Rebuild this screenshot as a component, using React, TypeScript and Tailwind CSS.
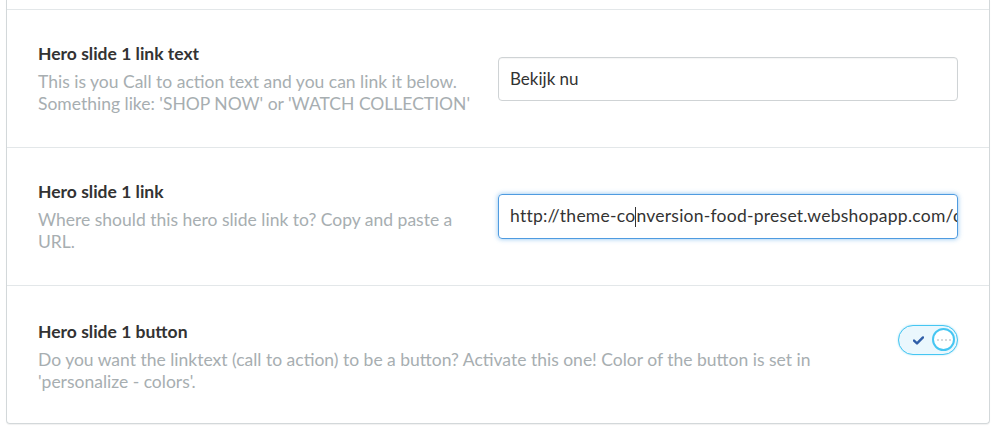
import React from "react";

const font = { fontFamily: "Lato, 'Open Sans', sans-serif" };

function Toggle() {
  return (
    <div className="relative flex h-[30px] w-[60px] shrink-0 items-center rounded-full border-[1.5px] border-[#46c6f2] bg-[#eaf7fd] shadow-[0_0_2px_rgba(70,198,242,0.5)]">
      <svg className="absolute left-[14px] top-[10px]" width="11" height="9" viewBox="0 0 11 9">
        <path d="M1 4.6 L4 7.4 L10 1.4" fill="none" stroke="#2f5ea8" strokeWidth="2.4" strokeLinecap="round" strokeLinejoin="round" />
      </svg>
      <div className="absolute right-[2px] top-[2px] flex h-[23px] w-[23px] items-center justify-center gap-[2px] rounded-full border-2 border-[#46c6f2] bg-white">
        <span className="h-[2px] w-[2px] rounded-full bg-[#c9cdd0]" />
        <span className="h-[2px] w-[2px] rounded-full bg-[#c9cdd0]" />
        <span className="h-[2px] w-[2px] rounded-full bg-[#c9cdd0]" />
        <span className="h-[2px] w-[2px] rounded-full bg-[#c9cdd0]" />
      </div>
    </div>
  );
}

function Label({ title, desc }: { title: string; desc: string }) {
  return (
    <div>
      <div className="mb-[6px] text-[17.5px] font-bold leading-[22px] text-[#333]">{title}</div>
      <div className="text-[17.5px] leading-[22px] text-[#a7aeb1]">{desc}</div>
    </div>
  );
}

export default function App() {
  return (
    <div className="h-[434px] w-[1000px] bg-white" style={font}>
      <div className="ml-[6px] w-[984px] rounded-b-[4px] border-x border-b border-[#d3d8da] shadow-[0_1px_1px_rgba(0,0,0,0.06)]">
        <div className="h-[10px] border-b border-[#e3e7e9]" />
        <div className="flex h-[138px] items-center gap-[20px] border-b border-[#e3e7e9] px-[31px]">
          <div className="w-[440px]">
            <Label
              title="Hero slide 1 link text"
              desc="This is you Call to action text and you can link it below. Something like: 'SHOP NOW' or 'WATCH COLLECTION'"
            />
          </div>
          <div className="flex h-[44px] w-[460px] items-center rounded-[4px] border border-[#cfd3d5] px-[11px] text-[17px] text-[#333] shadow-[inset_0_1px_1px_rgba(0,0,0,0.04)]">
            Bekijk nu
          </div>
        </div>
        <div className="flex h-[138px] items-center gap-[20px] border-b border-[#e3e7e9] px-[31px]">
          <div className="w-[440px]">
            <Label
              title="Hero slide 1 link"
              desc="Where should this hero slide link to? Copy and paste a URL."
            />
          </div>
          <div className="flex h-[45px] w-[460px] items-center overflow-hidden whitespace-nowrap rounded-[4px] border border-[#4f9be0] px-[11px] text-[17.5px] tracking-[0.25px] text-[#333] shadow-[0_0_5px_rgba(102,175,233,0.75)]">
            <span>http://theme-co</span>
            <span className="inline-block h-[20px] w-px shrink-0 bg-[#333]" />
            <span>nversion-food-preset.webshopapp.com/collection</span>
          </div>
        </div>
        <div className="flex h-[137px] items-start gap-[20px] px-[31px] pt-[35px]">
          <div className="flex-1">
            <Label
              title="Hero slide 1 button"
              desc="Do you want the linktext (call to action) to be a button? Activate this one! Color of the button is set in 'personalize - colors'."
            />
          </div>
          <div className="mt-[4px]">
            <Toggle />
          </div>
        </div>
      </div>
    </div>
  );
}
